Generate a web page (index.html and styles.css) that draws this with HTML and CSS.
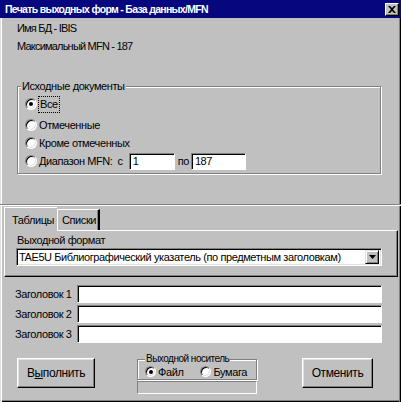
FILE: index.html
```html
<!DOCTYPE html>
<html lang="ru">
<head>
<meta charset="utf-8">
<title>Печать выходных форм</title>
<link rel="stylesheet" href="styles.css">
</head>
<body>
<div class="win">
  <div class="titlebar">
    <span class="title">Печать выходных форм - База данных/MFN</span>
    <span class="close"><svg width="8" height="7" viewBox="0 0 8 7"><path d="M0 0h2l2 2 2-2h2L5 3.5 8 7H6L4 5 2 7H0l3-3.5z" fill="#000"/></svg></span>
  </div>
  <div class="frame">
    <div class="upper">
      <div class="info">Имя БД - IBIS</div>
      <div class="info">Максимальный MFN - 187</div>
      <fieldset class="group docs">
        <legend>Исходные документы</legend>
        <div class="rrow first"><span class="radio on"></span><span class="focus">Все</span></div>
        <div class="rrow second"><span class="radio"></span><span class="rtext">Отмеченные</span></div>
        <div class="rrow"><span class="radio"></span><span class="rtext">Кроме отмеченных</span></div>
        <div class="rrow"><span class="radio"></span><span class="rtext">Диапазон MFN:</span><span class="c">с</span><span class="field from">1</span><span class="po">по</span><span class="field to">187</span></div>
      </fieldset>
    </div>
    <div class="sep"></div>
    <div class="tabs">
      <div class="tab active">Таблицы</div>
      <div class="tab">Списки</div>
    </div>
    <div class="panel">
      <div class="plabel">Выходной формат</div>
      <div class="combo">
        <span class="ctext">TAE5U Библиографический указатель (по предметным заголовкам)</span>
        <span class="cbtn"><svg width="7" height="4" viewBox="0 0 7 4"><path d="M0 0h7L3.5 4z" fill="#000"/></svg></span>
      </div>
    </div>
    <div class="heads">
      <div class="hrow"><span class="hlabel">Заголовок 1</span><span class="hinput"></span></div>
      <div class="hrow"><span class="hlabel">Заголовок 2</span><span class="hinput"></span></div>
      <div class="hrow"><span class="hlabel">Заголовок 3</span><span class="hinput"></span></div>
    </div>
    <div class="actions">
      <div class="btn run">В<u>ы</u>полнить</div>
      <div class="media">
        <fieldset class="group mgroup">
          <legend>Выходной носитель</legend>
          <div class="mrow">
            <span class="radio on"></span><span class="rtext">Файл</span>
            <span class="radio paper"></span><span class="rtext">Бумага</span>
          </div>
        </fieldset>
        <div class="status"></div>
      </div>
      <div class="btn cancel">Отменить</div>
    </div>
  </div>
</div>
</body>
</html>
```
FILE: styles.css
```css
* { box-sizing: border-box; }
html, body { margin: 0; padding: 0; }
body {
  width: 401px;
  height: 402px;
  overflow: hidden;
  background: #c0c0c0;
  font-family: "Liberation Sans", Arial, sans-serif;
  font-size: 11px;
  letter-spacing: -0.4px;
  color: #000;
}
.win { width: 401px; height: 402px; display: flex; flex-direction: column; }
.titlebar {
  height: 18px;
  background: #06067e;
  display: flex;
  align-items: center;
  justify-content: space-between;
  padding: 0 2px 0 5px;
}
.title {
  color: #fff; font-weight: bold;
  font-size: 10.5px; line-height: 14px; letter-spacing: -0.7px;
}
.close {
  width: 14px; height: 13px;
  background: #c0c0c0;
  border: 1px solid; border-color: #fff #000 #000 #fff;
  box-shadow: inset -1px -1px #808080;
  display: flex; align-items: center; justify-content: center;
  margin-top: 1px;
}
.frame {
  flex: 1;
  display: flex; flex-direction: column;
  box-shadow: inset 1px 0 #dfdfdf, inset 2px 0 #fff, inset -1px 0 #000, inset -2px 0 #808080,
              inset 0 -1px #000, inset 0 -2px #808080;
}
.upper { height: 186px; padding-top: 1px; }
.info { line-height: 18px; padding-left: 17px; letter-spacing: -0.8px; }
.group {
  margin: 0;
  border: 1px solid #808080;
  box-shadow: 1px 1px 0 #fff, inset 1px 1px 0 #fff;
}
.group legend {
  padding: 0 1px;
  line-height: 14px;
  background: #c0c0c0;
  position: relative;
}
.docs { margin: 24px 0 0 17px; width: 364px; padding: 2px 0 3px 3px; }
.rrow { display: flex; align-items: center; height: 18px; margin-left: 4px; }
.rrow.second { margin-top: 3px; }
.radio {
  width: 12px; height: 12px; flex: none;
  border-radius: 50%;
  background: #fff;
  border: 1px solid; border-color: #808080 #fff #fff #808080;
  box-shadow: inset 1px 1px #000, inset -1px -1px #dfdfdf;
  display: flex; align-items: center; justify-content: center;
  margin-right: 1px;
}
.radio.on::after { content: ""; width: 4px; height: 4px; border-radius: 50%; background: #000; }
.rtext { padding-left: 1px; }
.focus { border: 1px dotted #000; padding: 1px 1px; line-height: 13px; }
.c { margin-left: 5px; }
.field {
  height: 17px;
  background: #fff;
  border-top: 1px solid #808080; border-left: 1px solid #808080;
  border-right: 1px solid #fff; border-bottom: 1px solid #fff;
  box-shadow: inset 1px 1px #000;
  padding: 0 0 0 3px;
  line-height: 15px;
}
.field.from { width: 46px; margin-left: 6px; }
.po { margin-left: 3px; }
.field.to { width: 55px; margin-left: 2px; }
.sep { height: 2px; border-top: 1px solid #808080; border-bottom: 1px solid #fff; }
.tabs { height: 24px; display: flex; align-items: flex-end; padding-left: 4px; }
.tab {
  background: #c0c0c0;
  border-top: 1px solid #fff; border-left: 1px solid #fff; border-right: 1px solid #000;
  box-shadow: inset -1px 0 #808080;
  line-height: 14px;
}
.tab.active {
  height: 24px; width: 53px;
  padding: 5px 0 0 7px;
  margin-bottom: -1px;
  position: relative; z-index: 1;
  border-right: none; box-shadow: none;
}
.tab:not(.active) { height: 21px; width: 43px; padding: 3px 0 0 4px; border-right-width: 2px; }
.panel {
  height: 47px;
  margin: 0 3px 0 4px;
  border-top: 1px solid #fff; border-left: 1px solid #fff;
  border-right: 1px solid #000; border-bottom: 1px solid #000;
  box-shadow: inset -1px -1px #808080;
  padding-left: 11px;
}
.plabel { line-height: 14px; margin-top: 2px; padding-left: 1px; }
.combo {
  width: 366px; height: 18px; margin-top: 1px;
  background: #fff;
  border-top: 1px solid #808080; border-left: 1px solid #808080;
  border-right: 1px solid #fff; border-bottom: 1px solid #fff;
  box-shadow: inset 1px 1px #000, inset -1px -1px #dfdfdf;
  display: flex; align-items: center; justify-content: space-between;
  padding: 0 2px 0 2px;
}
.ctext { line-height: 14px; }
.cbtn {
  width: 14px; height: 14px;
  background: #c0c0c0;
  border: 1px solid; border-color: #dfdfdf #000 #000 #dfdfdf;
  box-shadow: inset 1px 1px #fff, inset -1px -1px #808080;
  display: flex; align-items: center; justify-content: center;
}
.heads { margin-top: 8px; display: flex; flex-direction: column; gap: 2px; }
.hrow { display: flex; align-items: center; height: 18px; }
.hlabel { width: 77px; padding-left: 15px; white-space: nowrap; }
.hinput {
  width: 305px; height: 18px;
  background: #fff;
  border-top: 1px solid #808080; border-left: 1px solid #808080;
  border-right: 1px solid #fff; border-bottom: 1px solid #fff;
  box-shadow: inset 1px 1px #000;
}
.actions { margin-top: 10px; display: flex; align-items: flex-start; padding-left: 17px; }
.btn {
  height: 30px; margin-top: 5px;
  background: #c0c0c0;
  border: 1px solid; border-color: #fff #000 #000 #fff;
  box-shadow: inset -1px -1px #808080, inset 1px 1px #dfdfdf;
  display: flex; align-items: center; justify-content: center;
  font-size: 12px;
}
.btn u { text-underline-offset: 1px; }
.run { width: 78px; }
.cancel { width: 71px; margin-left: 45px; }
.media { width: 120px; margin-left: 42px; }
.mgroup { padding: 0 0 1px 7px; width: 120px; }
.mgroup legend { line-height: 12px; font-size: 10px; letter-spacing: -0.5px; }
.mrow { display: flex; align-items: center; height: 13px; }
.mrow .radio { width: 11px; height: 11px; }
.radio.paper { margin-left: 17px; }
.status {
  height: 13px; margin-top: 1px;
  border-top: 1px solid #808080; border-left: 1px solid #808080;
  border-right: 1px solid #fff; border-bottom: 1px solid #fff;
}
```
